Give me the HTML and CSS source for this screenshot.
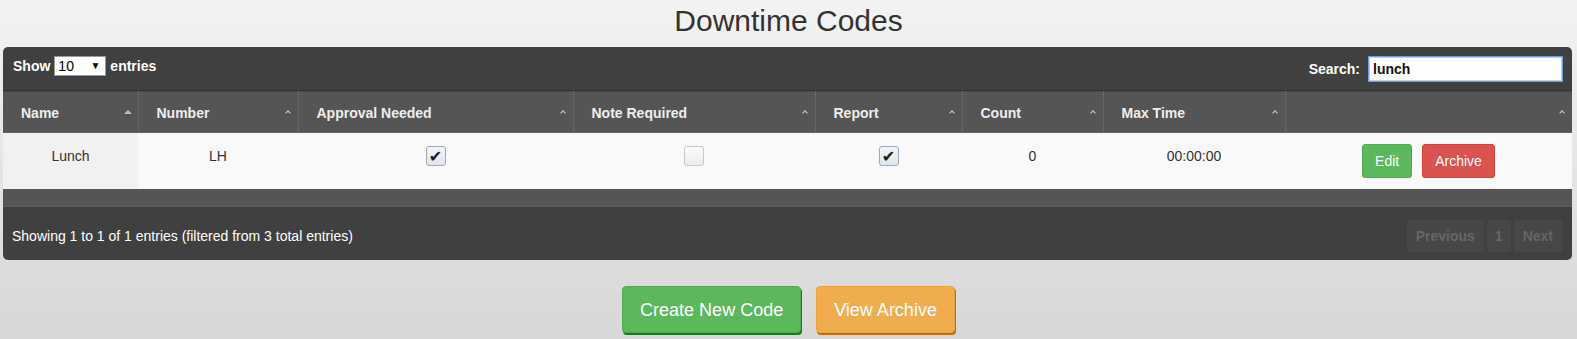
FILE: index.html
```html
<!DOCTYPE html>
<html lang="en">
<head>
<meta charset="utf-8">
<title>Downtime Codes</title>
<link rel="stylesheet" href="styles.css">
</head>
<body>
<h1 class="title">Downtime Codes</h1>
<div class="panel">
  <div class="toolbar">
    <label class="length">Show
      <span class="select-wrap"><select class="select"><option>10</option><option>25</option></select></span>
      entries</label>
    <label class="search">Search: <input class="search-input" type="text" value="lunch"></label>
  </div>
  <table class="grid">
    <colgroup>
      <col class="c1"><col class="c2"><col class="c3"><col class="c4"><col class="c5"><col class="c6"><col class="c7"><col class="c8">
    </colgroup>
    <thead>
      <tr>
        <th><span class="th-in">Name<span class="sort-asc"></span></span></th>
        <th><span class="th-in">Number<span class="sort"></span></span></th>
        <th><span class="th-in">Approval Needed<span class="sort"></span></span></th>
        <th><span class="th-in">Note Required<span class="sort"></span></span></th>
        <th><span class="th-in">Report<span class="sort"></span></span></th>
        <th><span class="th-in">Count<span class="sort"></span></span></th>
        <th><span class="th-in">Max Time<span class="sort"></span></span></th>
        <th><span class="th-in"><span></span><span class="sort"></span></span></th>
      </tr>
    </thead>
    <tbody>
      <tr>
        <td class="sorted">Lunch</td>
        <td>LH</td>
        <td><span class="cb cb-on">✔</span></td>
        <td><span class="cb"></span></td>
        <td><span class="cb cb-on">✔</span></td>
        <td>0</td>
        <td>00:00:00</td>
        <td><div class="actions"><button class="btn btn-edit">Edit</button><button class="btn btn-archive">Archive</button></div></td>
      </tr>
    </tbody>
  </table>
  <div class="band"></div>
  <div class="footer">
    <div class="info">Showing 1 to 1 of 1 entries (filtered from 3 total entries)</div>
    <div class="pager">
      <span class="pg">Previous</span><span class="pg pg-num">1</span><span class="pg">Next</span>
    </div>
  </div>
</div>
<div class="bottom">
  <button class="big big-green">Create New Code</button>
  <button class="big big-orange">View Archive</button>
</div>
</body>
</html>
```
FILE: styles.css
```css
html, body {
  margin: 0;
  padding: 0;
}
body {
  font-family: "Liberation Sans", Arial, sans-serif;
  background: linear-gradient(#f3f3f3, #d7d7d7);
  min-height: 339px;
  color: #333;
}
.title {
  margin: 0 0 9px;
  padding-top: 4px;
  font-size: 30px;
  line-height: 34px;
  font-weight: normal;
  text-align: center;
  color: #333;
}
.panel {
  margin: 0 5px 0 3px;
  background: #404040;
  border-radius: 5px;
  overflow: hidden;
}
.toolbar {
  height: 44px;
  box-sizing: border-box;
  padding: 9px 9px 0 10px;
  display: flex;
  justify-content: space-between;
  align-items: flex-start;
  border-bottom: 1px solid #333;
}
.length, .search {
  display: flex;
  align-items: center;
  gap: 4px;
  color: #fff;
  font-weight: bold;
  font-size: 14px;
}
.search { gap: 8px; }
.select-wrap {
  position: relative;
  display: inline-block;
}
.select-wrap::after {
  content: "▼";
  position: absolute;
  right: 6px;
  top: 4px;
  font-size: 10px;
  color: #000;
  pointer-events: none;
}
.select {
  appearance: none;
  -webkit-appearance: none;
  width: 52px;
  height: 20px;
  box-sizing: border-box;
  border: 1px solid #999;
  border-radius: 0;
  background: #fff;
  padding: 0 0 0 3px;
  font-family: "Liberation Sans", Arial, sans-serif;
  font-size: 14px;
  color: #000;
}
.search-input {
  width: 195px;
  height: 26px;
  box-sizing: border-box;
  border: 1px solid #6f9fdc;
  box-shadow: inset 0 0 0 1px #b9d0ee;
  padding: 0 4px 1px;
  font-family: "Liberation Sans", Arial, sans-serif;
  font-size: 14px;
  font-weight: bold;
  color: #111;
  outline: none;
}
.grid {
  width: 100%;
  table-layout: fixed;
  border-collapse: collapse;
  font-size: 14px;
}
.c1 { width: 135px; }
.c2 { width: 160px; }
.c3 { width: 275px; }
.c4 { width: 242px; }
.c5 { width: 147px; }
.c6 { width: 141px; }
.c7 { width: 182px; }
.c8 { width: auto; }
.grid th {
  background: #555;
  color: #eee;
  font-weight: bold;
  text-align: left;
  height: 39px;
  padding: 1px 6px 0 18px;
  border-right: 1px solid #666;
  border-bottom: 1px solid #666;
  border-top: 1px solid #4a4a4a;
}
.grid th:last-child { border-right: none; }
.th-in {
  display: flex;
  justify-content: space-between;
  align-items: center;
}
.sort, .sort-asc {
  display: inline-block;
  width: 7px;
  height: 5px;
  position: relative;
}
.sort::before {
  content: "";
  position: absolute;
  left: 1px;
  top: 1px;
  width: 3px;
  height: 3px;
  border-left: 1px solid #ccc;
  border-top: 1px solid #ccc;
  transform: rotate(45deg);
}
.sort-asc::before {
  content: "";
  position: absolute;
  left: -1px;
  top: 0;
  border-left: 4px solid transparent;
  border-right: 4px solid transparent;
  border-bottom: 4px solid #bbb;
}
.grid tbody tr { height: 56px; }
.grid td {
  background: #f9f9f9;
  color: #333;
  text-align: center;
  vertical-align: top;
  padding: 13px 8px 0;
  line-height: 20px;
}
.grid td.sorted { background: #f1f1f1; }
.cb {
  display: inline-block;
  width: 20px;
  height: 20px;
  box-sizing: border-box;
  border: 1px solid #c9c9c9;
  border-radius: 3px;
  background: linear-gradient(#fbfbfb, #ececec);
  vertical-align: top;
  font-family: "DejaVu Sans", sans-serif;
  font-size: 16px;
  line-height: 19px;
  color: #1e1e1e;
}
.cb-on {
  border-color: #9ba9b8;
  background: linear-gradient(#f1f4f7, #e1e6ec);
}
.actions {
  display: flex;
  justify-content: center;
  gap: 10px;
  margin-top: -2px;
}
.btn {
  font-family: "Liberation Sans", Arial, sans-serif;
  font-size: 14px;
  line-height: 16px;
  padding: 8px 12px;
  border-radius: 3px;
  color: #fff;
  cursor: pointer;
}
.btn-edit {
  background: #5cb85c;
  border: 1px solid #4cae4c;
}
.btn-archive {
  background: #d9534f;
  border: 1px solid #d43f3a;
}
.band {
  height: 17px;
  background: #555;
  border-bottom: 1px solid #5d5d5d;
}
.footer {
  display: flex;
  justify-content: space-between;
  align-items: center;
  padding: 13px 10px 8px 9px;
}
.info {
  color: #fff;
  font-size: 14px;
}
.pager {
  display: flex;
  gap: 3px;
}
.pg {
  height: 32px;
  line-height: 32px;
  padding: 0 9px;
  background: #474747;
  color: #666;
  font-weight: bold;
  font-size: 14px;
  border-radius: 2px;
}
.pg-num { padding: 0 8px; }
.bottom {
  display: flex;
  justify-content: center;
  gap: 15px;
  margin-top: 26px;
}
.big {
  font-family: "Liberation Sans", Arial, sans-serif;
  font-size: 18px;
  line-height: 22px;
  padding: 12px 17px 11px;
  border-radius: 4px;
  color: #fff;
  cursor: pointer;
}
.big-green {
  background: #5cb85c;
  border: 1px solid #4cae4c;
  box-shadow: 1px 2px 0 #2f6b2f;
}
.big-orange {
  background: #f0ad4e;
  border: 1px solid #eea236;
  box-shadow: 1px 2px 0 #a8732a;
}
```
